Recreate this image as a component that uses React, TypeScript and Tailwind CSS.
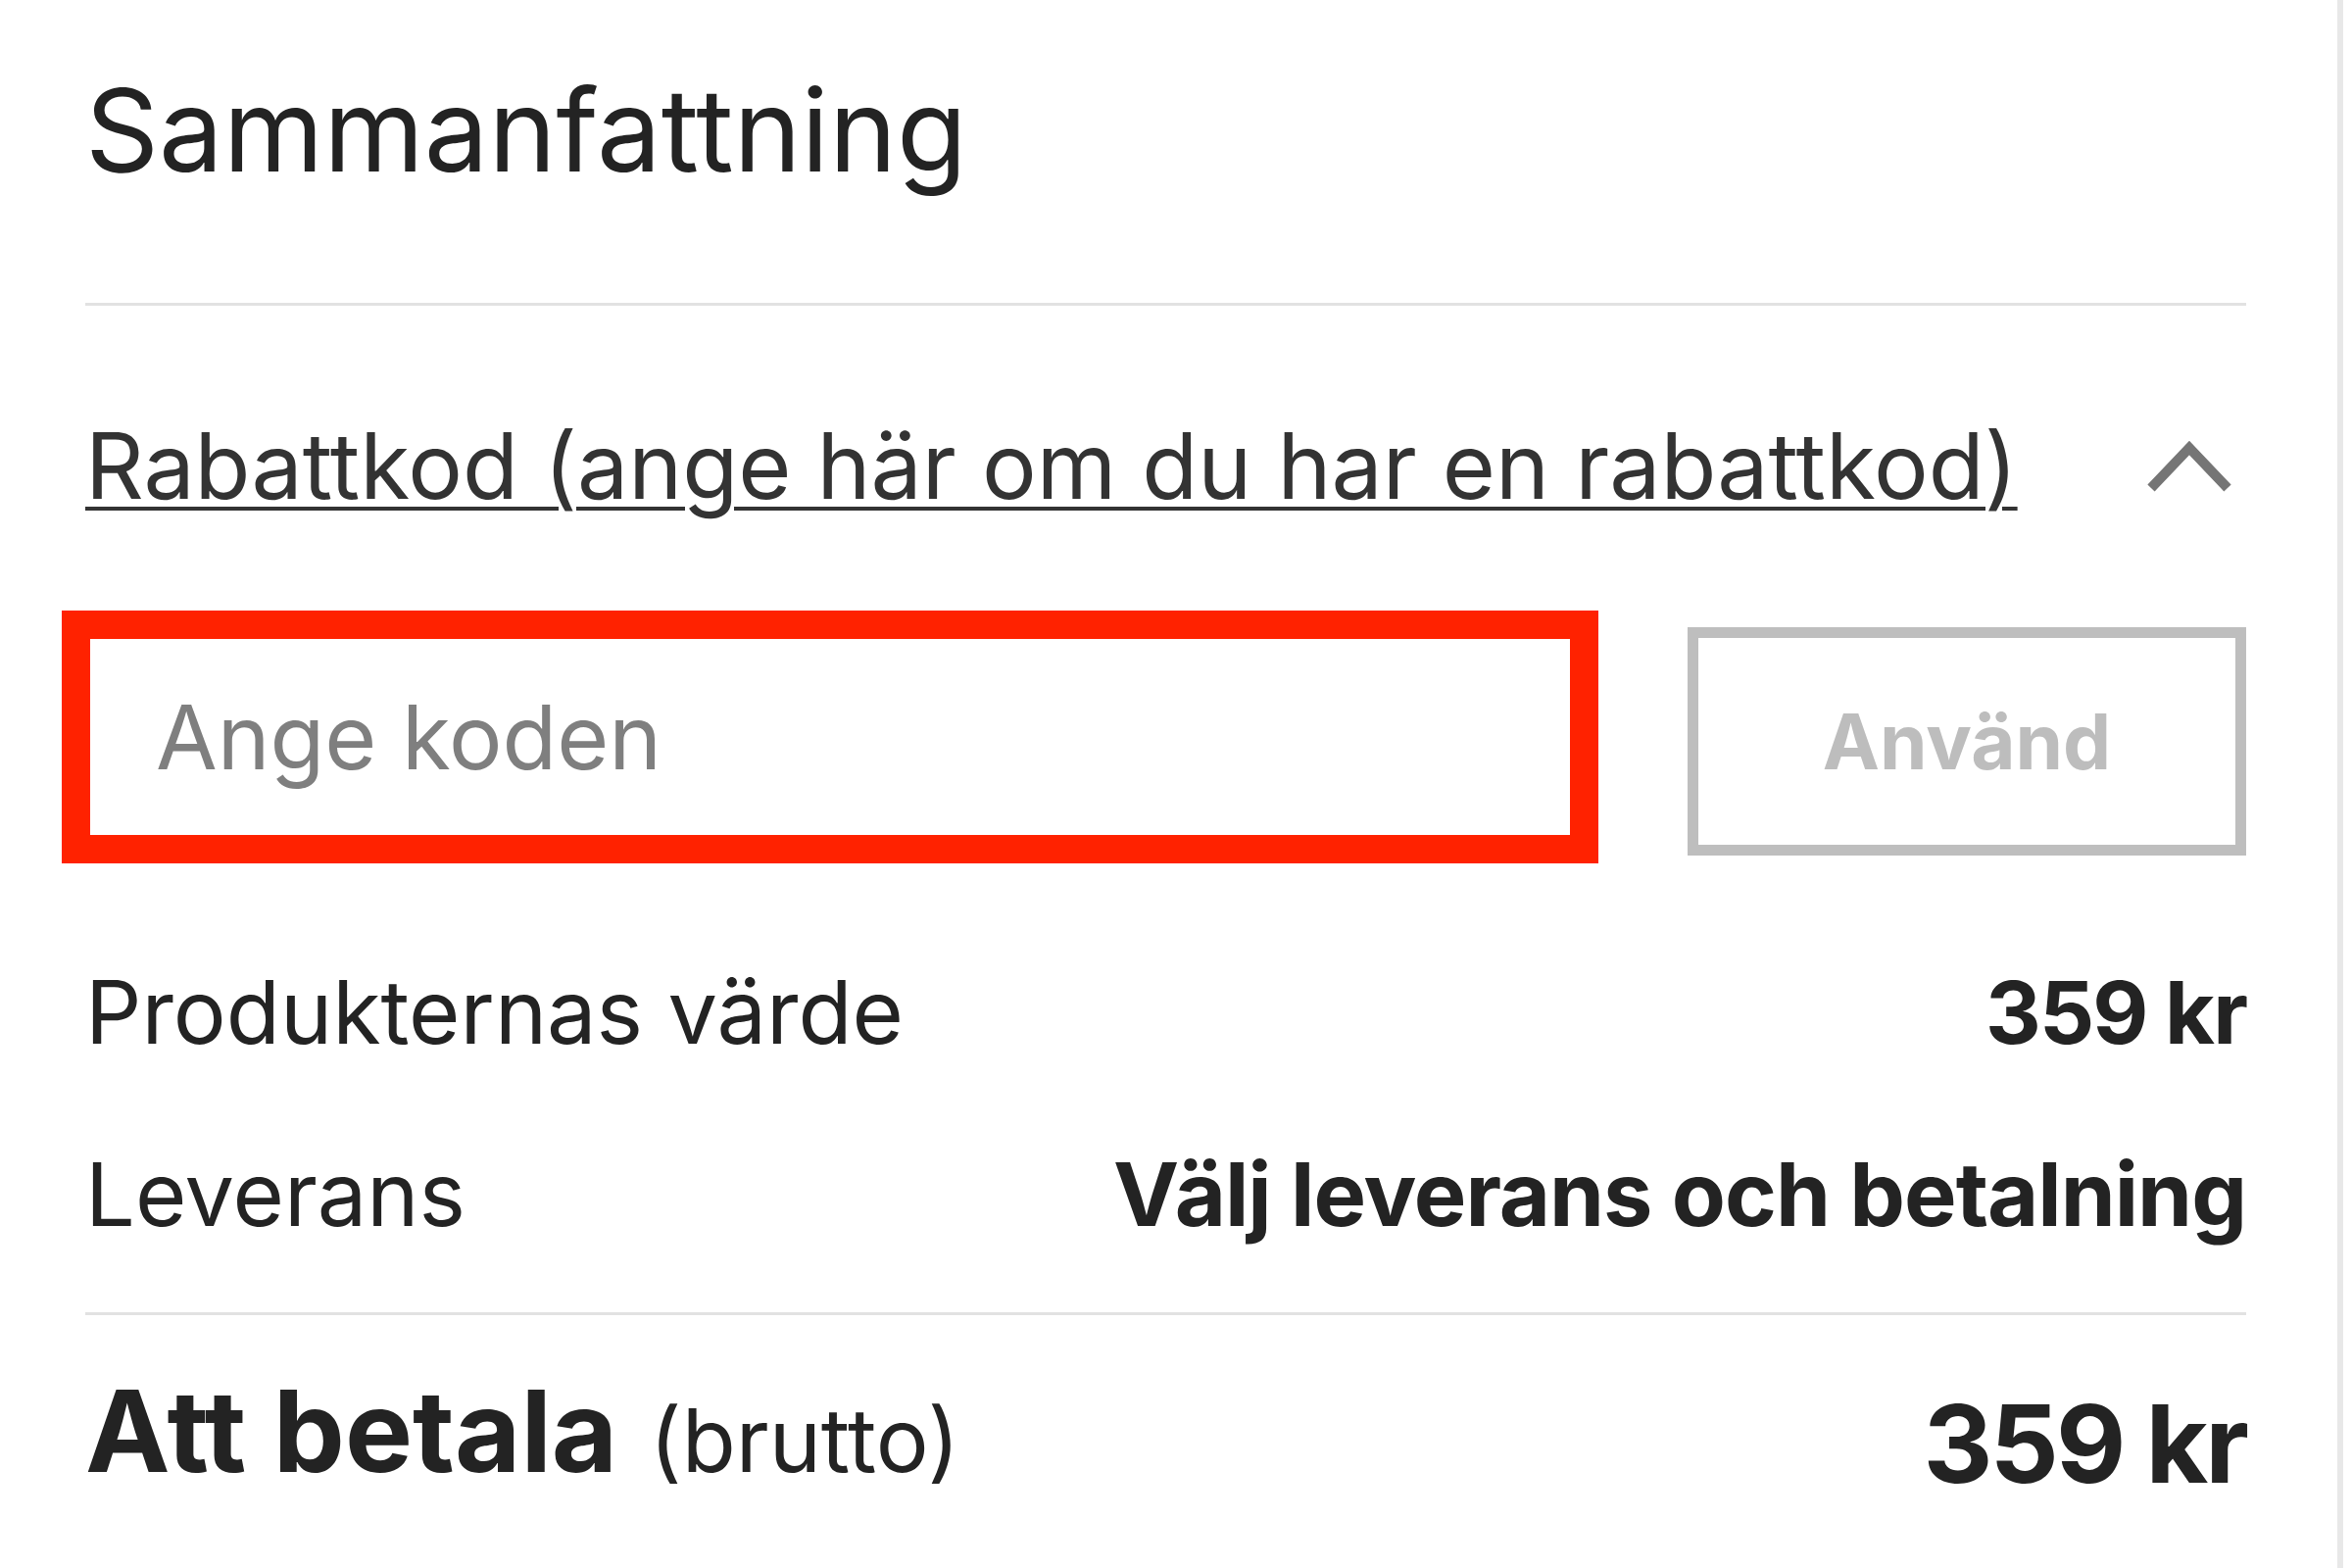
import React from 'react';

const ChevronUp: React.FC = () => (
  <svg width="88" height="54" viewBox="0 0 88 54" fill="none" className="mr-[14px] shrink-0">
    <polyline points="5,50 44,9 83,50" stroke="#757575" strokeWidth="10" strokeLinejoin="miter" />
  </svg>
);

const App: React.FC = () => {
  return (
    <div className="min-h-screen w-full bg-white font-['Inter',sans-serif] text-[#232323]">
      <div className="w-[2391px] min-h-[1600px] border-r-[6px] border-[#e8e8e8] pl-[87px] pr-[93px] pt-[74px]">
        <h2 className="text-[117px] leading-[117px] font-normal">Sammanfattning</h2>

        <div className="mt-[118px] h-[3px] bg-[#e2e2e2]" />

        <div className="mt-[117px] flex items-center justify-between">
          <button className="text-[93px] leading-[92px] text-[#333] underline decoration-[4px] underline-offset-[8px]">
            Rabattkod (ange här om du har en rabattkod)
          </button>
          <ChevronUp />
        </div>

        <div className="-ml-[24px] mt-[102px] flex items-start justify-between">
          <input
            type="text"
            placeholder="Ange koden"
            className="w-[1568px] h-[258px] border-[29px] border-[#ff2200] bg-white pl-[67px] text-[91px] text-[#232323] placeholder:text-[#7f7f7f] outline-none"
          />
          <button className="mt-[17px] flex h-[233px] w-[570px] items-center justify-center border-[11px] border-[#bebebe] text-[78px] font-bold text-[#bdbdbd]">
            Använd
          </button>
        </div>

        <div className="mt-[106px] flex items-baseline justify-between text-[90px] leading-[92px]">
          <span>Produkternas värde</span>
          <span className="text-[88px] font-bold tracking-[-2px]">359 kr</span>
        </div>

        <div className="mt-[94px] flex items-baseline justify-between text-[90px] leading-[92px]">
          <span>Leverans</span>
          <span className="font-bold tracking-[-1px]">Välj leverans och betalning</span>
        </div>

        <div className="mt-[74px] h-[3px] bg-[#e2e2e2]" />

        <div className="mt-[60px] flex items-start justify-between">
          <div className="text-[116px] leading-[116px]">
            <span className="font-bold">Att betala</span>{' '}
            <span className="text-[90px] font-normal">(brutto)</span>
          </div>
          <div className="mt-[13px] text-[110px] leading-[116px] font-bold tracking-[-3px]">359 kr</div>
        </div>
      </div>
    </div>
  );
};

export default App;
